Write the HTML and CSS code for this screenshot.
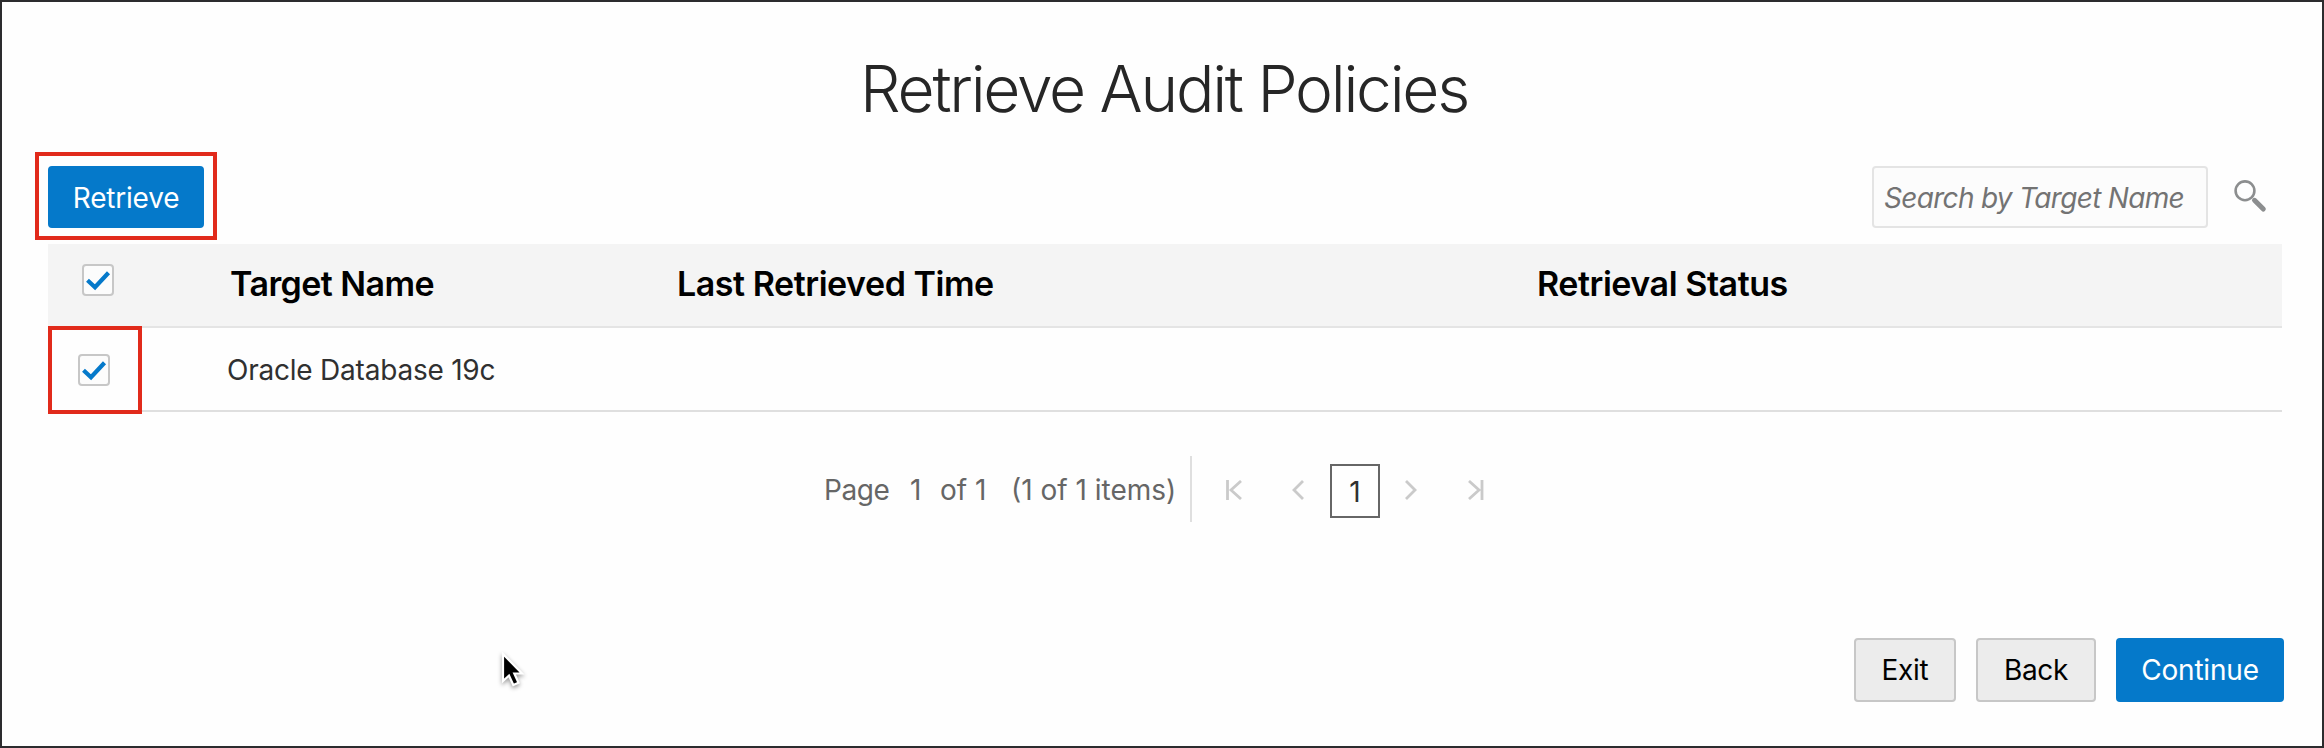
FILE: index.html
```html
<!DOCTYPE html>
<html lang="en">
<head>
<meta charset="utf-8">
<title>Retrieve Audit Policies</title>
<link rel="stylesheet" href="styles.css">
</head>
<body>
<main class="dialog">
  <h1 class="title">Retrieve Audit Policies</h1>

  <div class="toolbar">
    <div class="marked">
      <button class="btn btn-primary btn-retrieve">Retrieve</button>
      <span class="marker marker-button"></span>
    </div>
    <div class="search">
      <input class="search-input" type="text" placeholder="Search by Target Name">
      <svg class="search-icon" width="34" height="34" viewBox="0 0 34 34">
        <circle cx="12" cy="11.8" r="9.4" fill="none" stroke="#8c8e8f" stroke-width="2.6"/>
        <path d="M21.5 21.3L30.3 30.1" stroke="#8c8e8f" stroke-width="5" stroke-linecap="round"/>
      </svg>
    </div>
  </div>

  <div class="table">
    <div class="row row-head">
      <div class="check-cell">
        <span class="checkbox"><svg width="28" height="28" viewBox="0 0 28 28"><path d="M3.5 14.3L11 21.2L24.5 6.7" fill="none" stroke="#0579ca" stroke-width="4.2"/></svg></span>
      </div>
      <div class="head-cell head-name">Target Name</div>
      <div class="head-cell">Last Retrieved Time</div>
      <div class="head-cell">Retrieval Status</div>
    </div>
    <div class="row row-body">
      <div class="check-cell">
        <span class="checkbox"><svg width="28" height="28" viewBox="0 0 28 28"><path d="M3.5 14.3L11 21.2L24.5 6.7" fill="none" stroke="#0579ca" stroke-width="4.2"/></svg></span>
      </div>
      <div class="cell">Oracle Database 19c</div>
      <div class="cell"></div>
      <div class="cell"></div>
      <span class="marker marker-row"></span>
    </div>
  </div>

  <nav class="pager">
    <div class="pager-info">
      <span class="pager-label">Page</span><span class="pager-num">1</span><span class="pager-of">of 1</span><span class="pager-items">(1 of 1 items)</span>
    </div>
    <div class="pager-nav">
      <svg class="nav-first" width="16" height="20" viewBox="0 0 16 20"><path d="M1.5 0V20M15 1L5 10L15 19" /></svg>
      <svg class="nav-prev" width="12" height="20" viewBox="0 0 12 20"><path d="M11 1L2 10L11 19"/></svg>
      <span class="pager-current">1</span>
      <svg class="nav-next" width="12" height="20" viewBox="0 0 12 20"><path d="M1 1L10 10L1 19"/></svg>
      <svg class="nav-last" width="16" height="20" viewBox="0 0 16 20"><path d="M14 0V20M1 1L11 10L1 19"/></svg>
    </div>
  </nav>

  <footer class="actions">
    <button class="btn btn-exit">Exit</button>
    <button class="btn btn-back">Back</button>
    <button class="btn btn-primary btn-continue">Continue</button>
  </footer>

  <svg class="cursor" width="30" height="40" viewBox="0 0 30 40">
    <path d="M4 2V29L10 23.5L14.3 33L19.5 30.8L15.3 21.5H23Z" fill="#000" stroke="#fff" stroke-width="2.2"/>
  </svg>
</main>
</body>
</html>
```

FILE: styles.css
```css
* { box-sizing: border-box; }
body {
  margin: 0;
  font: 400 28px/34px Inter, "Liberation Sans", sans-serif;
  color: #303030;
}
.dialog {
  position: relative;
  width: 2324px;
  height: 748px;
  padding: 0 38px 0 46px;
  border: 2px solid #2c2c2e;
  background: #fefefe;
}
.title {
  margin: 0;
  padding: 47px 4px 0 0;
  height: 164px;
  font-size: 64px;
  line-height: 80px;
  font-weight: 330;
  letter-spacing: -2.25px;
  text-align: center;
  color: #262626;
}
.toolbar {
  display: flex;
  justify-content: space-between;
  height: 78px;
}
.marked { position: relative; }
.marker {
  position: absolute;
  border: 4px solid #e12a1b;
}
.marker-button { left: -13px; top: -14px; width: 182px; height: 88px; }
.marker-row { left: 0; top: -2px; width: 94px; height: 88px; }

.btn {
  height: 64px;
  padding: 0;
  border: 2px solid #c7c7c7;
  border-radius: 4px;
  background: #ececec;
  font: inherit;
  letter-spacing: -0.3px;
  text-align: center;
  color: #000;
}
.btn-primary {
  border-color: #0579ca;
  background: #0579ca;
  letter-spacing: -0.2px;
  color: #fff;
}
.btn-retrieve { display: block; width: 156px; height: 62px; padding-top: 2px; }

.search { display: flex; margin-right: 17px; }
.search-input {
  width: 336px;
  height: 62px;
  padding: 2px 10px 0;
  border: 2px solid #e4e4e4;
  border-radius: 4px;
  background: #fcfcfc;
  font: inherit;
  font-style: italic;
  letter-spacing: -0.69px;
}
.search-input::placeholder { color: #737373; opacity: 1; }
.search-icon { margin: 13px 0 0 25px; }

.table { width: 2234px; }
.row {
  display: grid;
  grid-template-columns: 179px 446px 860px 1fr;
  position: relative;
  height: 84px;
  border-bottom: 2px solid #dfdfdf;
}
.row-head { background: #f4f4f4; border-color: #e4e4e4; }
.head-cell {
  padding: 19px 0 0 4px;
  font-size: 34px;
  line-height: 42px;
  font-weight: 600;
  letter-spacing: -0.45px;
  color: #000;
}
.head-name { padding-left: 3px; letter-spacing: -0.55px; }
.cell { padding-top: 25px; letter-spacing: -0.22px; }
.check-cell { padding: 26px 0 0 30px; }
.row-head .check-cell { padding: 20px 0 0 34px; }
.checkbox {
  display: block;
  width: 32px;
  height: 32px;
  border: 2px solid #c7c7c7;
  border-radius: 4px;
  background: #fcfcfc;
}
.checkbox svg { display: block; }

.pager {
  display: flex;
  height: 66px;
  margin: 44px 0 0 776px;
}
.pager-info {
  display: flex;
  width: 368px;
  padding-top: 17px;
  border-right: 2px solid #dfdfdf;
  color: #666;
  white-space: nowrap;
}
.pager-label { width: 86px; letter-spacing: -0.4px; }
.pager-num { width: 30px; }
.pager-of { width: 71px; }
.pager-nav { display: flex; align-items: flex-start; }
.pager-nav svg {
  margin-top: 24px;
  fill: none;
  stroke: #cacaca;
  stroke-width: 2.8;
}
.nav-first { margin-left: 34px; }
.nav-prev { margin-left: 50px; }
.nav-next { margin-left: 25px; }
.nav-last { margin-left: 51px; }
.pager-current {
  width: 50px;
  height: 54px;
  margin: 8px 0 0 26px;
  padding-top: 9px;
  border: 2px solid #666;
  text-align: center;
}

.actions {
  display: flex;
  gap: 20px;
  margin-top: 116px;
  padding-left: 1806px;
}
.btn-exit { width: 102px; }
.btn-back { width: 120px; }
.btn-continue { width: 168px; }

.cursor { position: absolute; left: 497px; top: 650px; filter: drop-shadow(0 2px 2px rgba(0, 0, 0, .4)); }
```
